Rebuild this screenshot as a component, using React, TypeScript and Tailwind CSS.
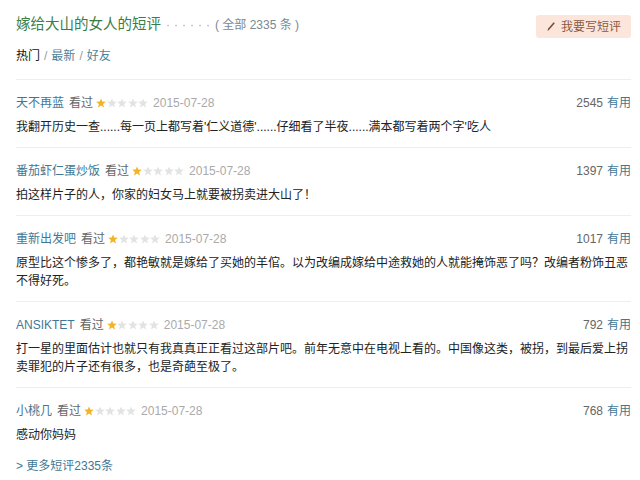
import React from 'react';

interface Comment {
  author: string;
  date: string;
  votes: number;
  lines: string[];
}

const comments: Comment[] = [
  {
    author: '天不再蓝',
    date: '2015-07-28',
    votes: 2545,
    lines: ["我翻开历史一查......每一页上都写着'仁义道德'......仔细看了半夜......满本都写着两个字'吃人"],
  },
  {
    author: '番茄虾仁蛋炒饭',
    date: '2015-07-28',
    votes: 1397,
    lines: ['拍这样片子的人，你家的妇女马上就要被拐卖进大山了！'],
  },
  {
    author: '重新出发吧',
    date: '2015-07-28',
    votes: 1017,
    lines: [
      '原型比这个惨多了，都艳敏就是嫁给了买她的羊倌。以为改编成嫁给中途救她的人就能掩饰恶了吗？改编者粉饰丑恶',
      '不得好死。',
    ],
  },
  {
    author: 'ANSIKTET',
    date: '2015-07-28',
    votes: 792,
    lines: [
      '打一星的里面估计也就只有我真真正正看过这部片吧。前年无意中在电视上看的。中国像这类，被拐，到最后爱上拐',
      '卖罪犯的片子还有很多，也是奇葩至极了。',
    ],
  },
  {
    author: '小桃几',
    date: '2015-07-28',
    votes: 768,
    lines: ['感动你妈妈'],
  },
];

// 五角星
function Star({ on }: { on: boolean }) {
  return (
    <svg width="10" height="10" viewBox="0 0 10 10">
      <polygon
        points="5,0.4 6.3,3.6 9.8,3.8 7.1,6 8,9.5 5,7.6 2,9.5 2.9,6 0.2,3.8 3.7,3.6"
        fill={on ? '#f4b324' : '#e3e3e3'}
      />
    </svg>
  );
}

function Rating({ value }: { value: number }) {
  return (
    <span className="inline-flex items-center gap-[0.5px] mx-[3px]">
      {[1, 2, 3, 4, 5].map((i) => (
        <Star key={i} on={i <= value} />
      ))}
    </span>
  );
}

export default function App() {
  return (
    <div
      className="w-[640px] h-[480px] bg-white overflow-hidden pl-4 pr-[9px] text-[#333]"
      style={{ fontFamily: '"Liberation Sans", "Noto Sans CJK SC", sans-serif' }}
    >
      {/* 标题 */}
      <div className="flex items-start justify-between pt-[12px]">
        <h2 className="flex items-baseline leading-[24px]">
          <span className="text-[14.5px] text-[#3b7d47]">嫁给大山的女人的短评</span>
          <span className="text-[12px] text-[#aaa] ml-[5px] tracking-[4px]">······</span>
          <span className="text-[12px] text-[#7a8a90] ml-[1px]">( 全部 2335 条 )</span>
        </h2>
        <button className="mt-[3px] h-[23px] w-[95px] rounded-[3px] bg-[#fce6dc] text-[12px] text-[#8a5a44] flex items-center justify-center gap-[5px]">
          <svg width="10" height="11" viewBox="0 0 10 11">
            <path d="M1.5 10 L2 7.8 L7.6 1.2 L8.8 2.2 L3.2 8.8 Z" fill="#7a4b35" />
          </svg>
          我要写短评
        </button>
      </div>

      {/* 标签 */}
      <div className="mt-[8px] pb-[13px] border-b border-[#eeeeee] text-[12px] leading-[20px] flex items-center">
        <span className="text-[#111]">热门</span>
        <span className="text-[#999] mx-[4px]">/</span>
        <span className="text-[#4f7f96]">最新</span>
        <span className="text-[#999] mx-[4px]">/</span>
        <span className="text-[#4f7f96]">好友</span>
      </div>

      {/* 短评列表 */}
      {comments.map((c, idx) => (
        <div
          key={c.author}
          className={`pt-[12px] pb-[11px] ${idx < comments.length - 1 ? 'border-b border-[#eeeeee]' : ''}`}
        >
          <div className="flex items-center justify-between h-[22px] text-[12px]">
            <div className="flex items-center">
              <span className="text-[#3f7794]">{c.author}</span>
              <span className="text-[#666] ml-[5px]">看过</span>
              <Rating value={1} />
              <span className="text-[#aaa] ml-[2px]">{c.date}</span>
            </div>
            <div>
              <span className="text-[#666]">{c.votes}</span>
              <span className="text-[#3f7794] ml-[4px]">有用</span>
            </div>
          </div>
          <p className="mt-[4px] text-[12px] leading-[18px] text-[#222] whitespace-nowrap">
            {c.lines.map((l, i) => (
              <React.Fragment key={i}>
                {i > 0 && <br />}
                {l}
              </React.Fragment>
            ))}
          </p>
        </div>
      ))}

      <div className="mt-[2px] text-[12px] leading-[18px] text-[#3f7794]">&gt; 更多短评2335条</div>
    </div>
  );
}
